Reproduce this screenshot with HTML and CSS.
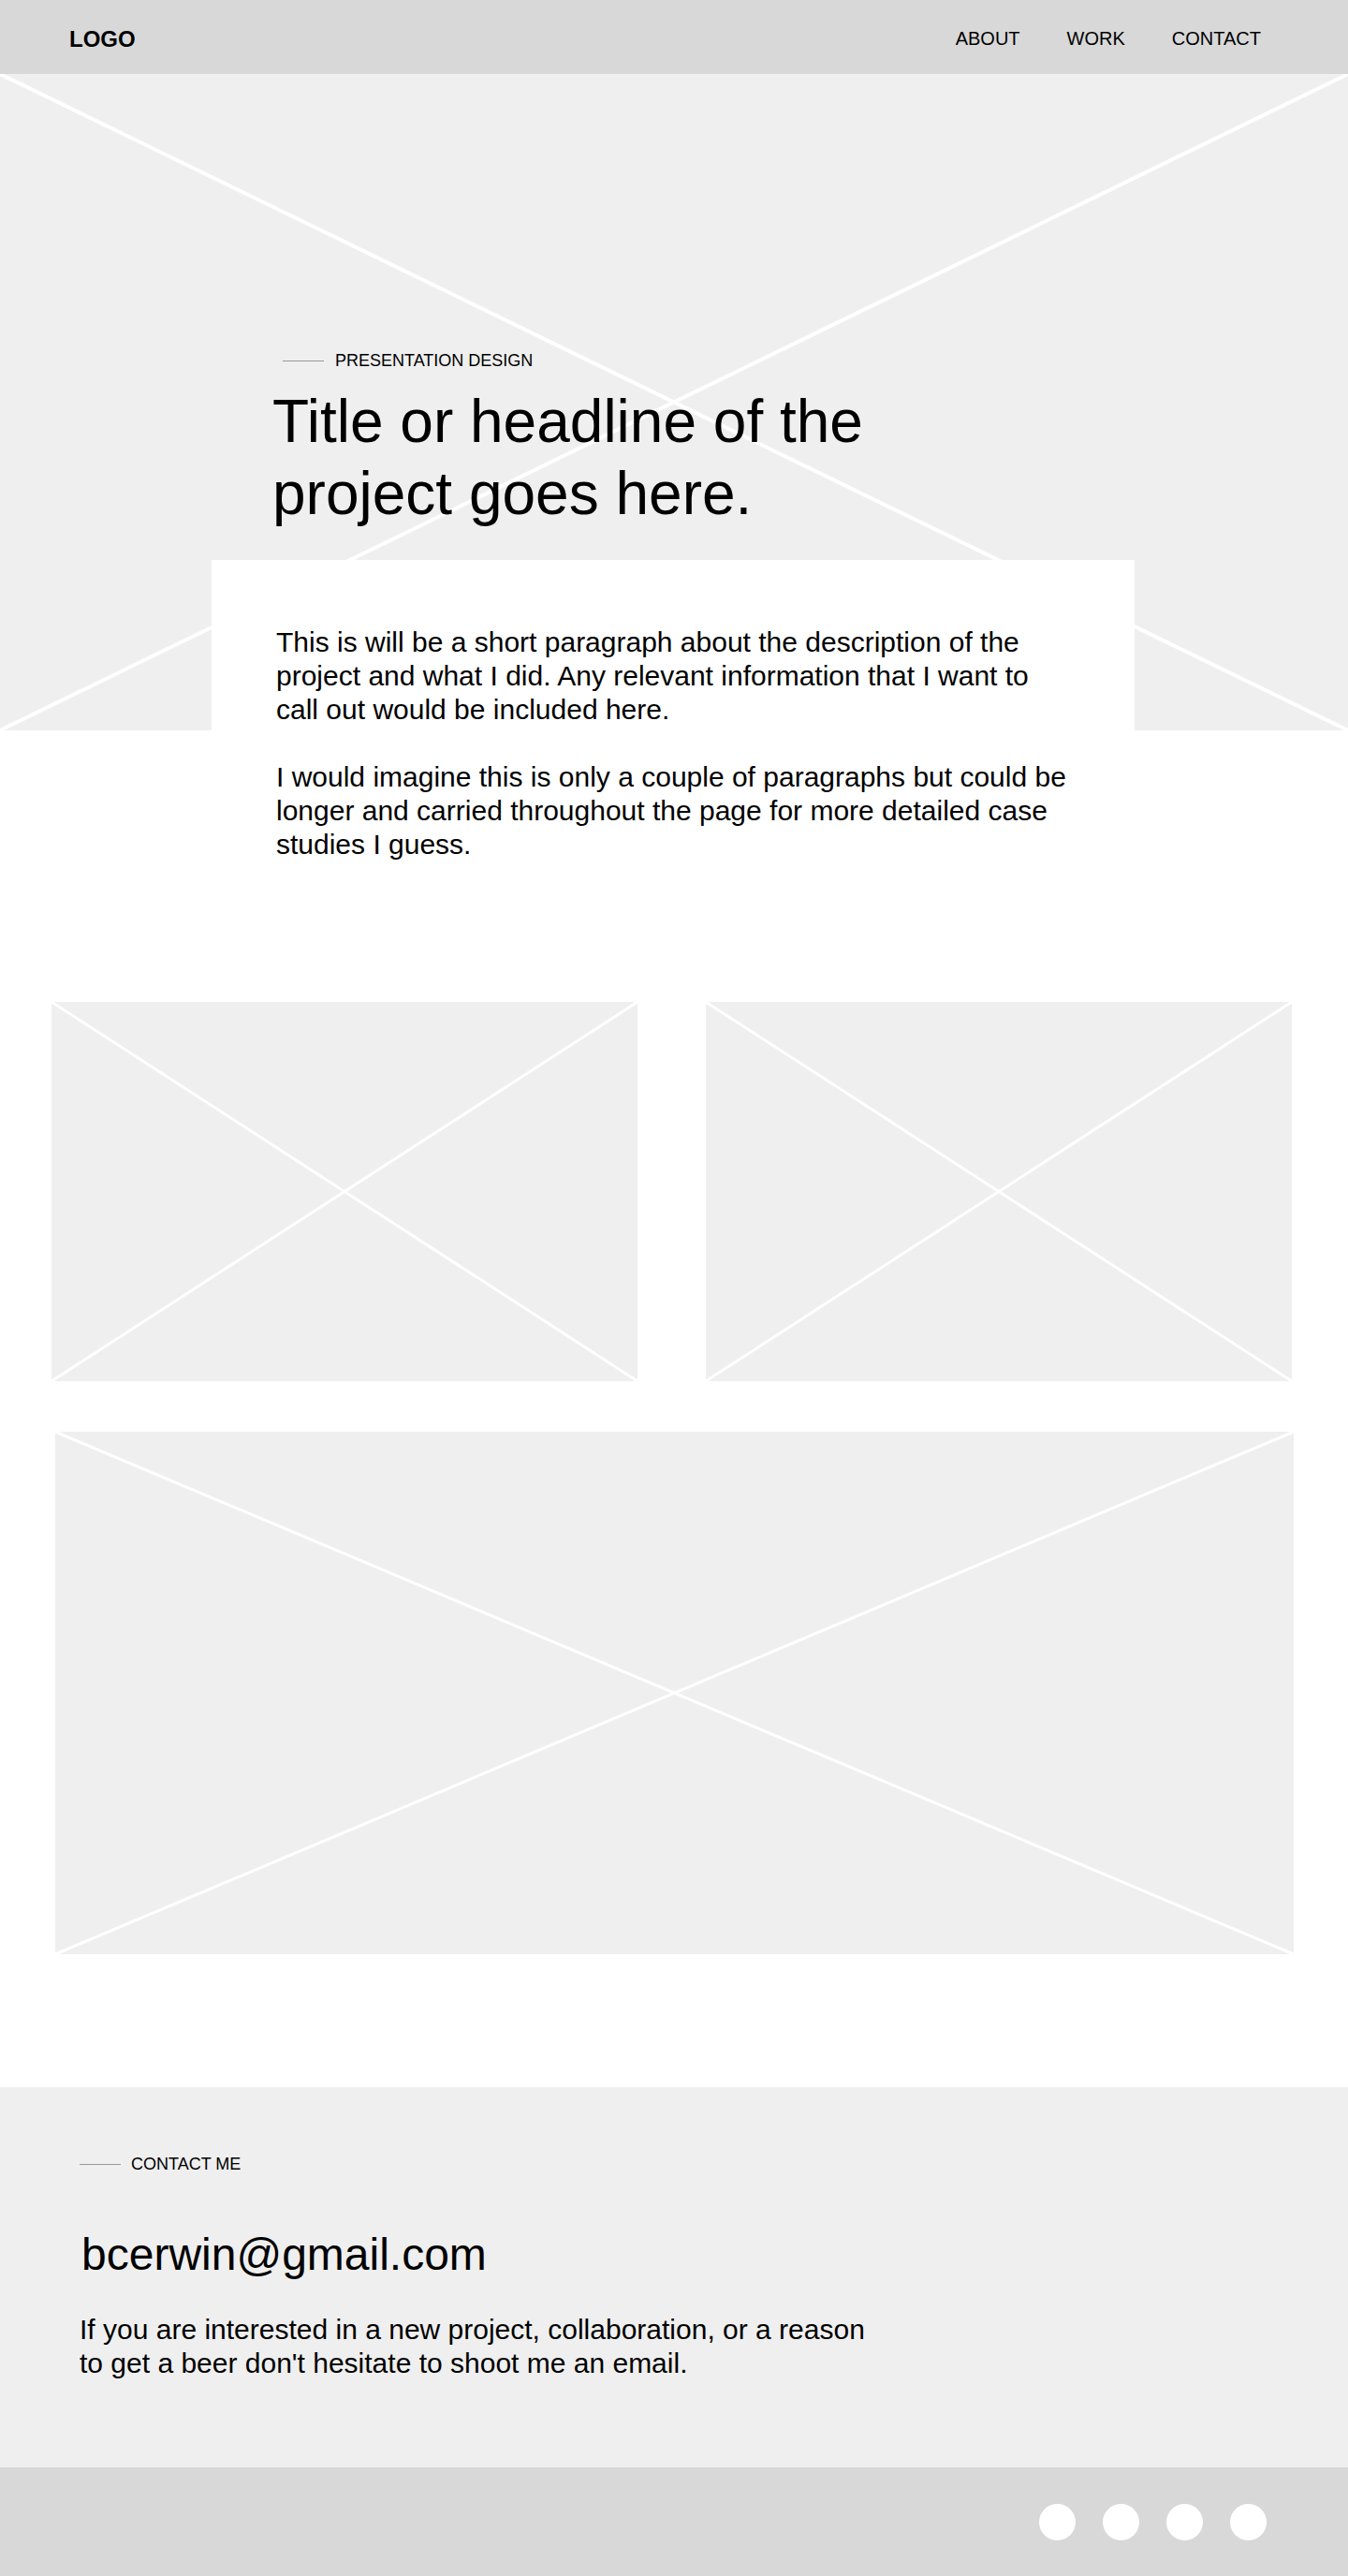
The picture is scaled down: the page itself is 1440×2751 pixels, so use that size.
FILE: index.html
```html
<!DOCTYPE html>
<html lang="en">
<head>
    <meta charset="UTF-8">
    <meta name="viewport" content="width=device-width, initial-scale=1.0">
    <title>Project Case Study</title>
    <link rel="stylesheet" href="styles.css">
</head>
<body>

    <!-- Header -->
    <header class="header">
        <div class="logo">LOGO</div>
        <nav class="nav">
            <a href="#">ABOUT</a>
            <a href="#">WORK</a>
            <a href="#">CONTACT</a>
        </nav>
    </header>

    <!-- Hero -->
    <section class="hero">
        <svg class="hero-x" viewBox="0 0 100 100" preserveAspectRatio="none">
            <line x1="0" y1="0" x2="100" y2="100" vector-effect="non-scaling-stroke"/>
            <line x1="100" y1="0" x2="0" y2="100" vector-effect="non-scaling-stroke"/>
        </svg>
        <div class="hero-content">
            <div class="eyebrow"><span class="rule"></span>PRESENTATION DESIGN</div>
            <h1 class="title">Title or headline of the project goes here.</h1>
        </div>
    </section>

    <!-- Intro card -->
    <section class="intro">
        <p>This is will be a short paragraph about the description of the project and what I did. Any relevant information that I want to<br>call out would be included here.</p>
        <p>I would imagine this is only a couple of paragraphs but could be longer and carried throughout the page for more detailed case studies I guess.</p>
    </section>

    <!-- Images -->
    <section class="gallery">
        <div class="img-row">
            <div class="placeholder">
                <svg viewBox="0 0 100 100" preserveAspectRatio="none">
                    <line x1="0" y1="0" x2="100" y2="100" vector-effect="non-scaling-stroke"/>
                    <line x1="100" y1="0" x2="0" y2="100" vector-effect="non-scaling-stroke"/>
                </svg>
            </div>
            <div class="placeholder">
                <svg viewBox="0 0 100 100" preserveAspectRatio="none">
                    <line x1="0" y1="0" x2="100" y2="100" vector-effect="non-scaling-stroke"/>
                    <line x1="100" y1="0" x2="0" y2="100" vector-effect="non-scaling-stroke"/>
                </svg>
            </div>
        </div>
        <div class="placeholder wide">
            <svg viewBox="0 0 100 100" preserveAspectRatio="none">
                <line x1="0" y1="0" x2="100" y2="100" vector-effect="non-scaling-stroke"/>
                <line x1="100" y1="0" x2="0" y2="100" vector-effect="non-scaling-stroke"/>
            </svg>
        </div>
    </section>

    <!-- Contact -->
    <section class="contact">
        <div class="eyebrow"><span class="rule"></span>CONTACT ME</div>
        <div class="email">bcerwin@gmail.com</div>
        <p class="contact-text">If you are interested in a new project, collaboration, or a reason to get a beer don't hesitate to shoot me an email.</p>
    </section>

    <!-- Footer -->
    <footer class="footer">
        <div class="socials">
            <span class="dot"></span>
            <span class="dot"></span>
            <span class="dot"></span>
            <span class="dot"></span>
        </div>
    </footer>

</body>
</html>
```

FILE: styles.css
```css
* {
    margin: 0;
    padding: 0;
    box-sizing: border-box;
}

body {
    font-family: "Liberation Sans", Arial, sans-serif;
    color: #000;
    background: #fff;
}

.header {
    height: 79px;
    background-color: #d8d8d8;
    display: flex;
    justify-content: space-between;
    align-items: center;
    padding: 4px 93px 0 74px;
}

.logo {
    font-size: 24px;
    font-weight: bold;
}

.nav {
    display: flex;
    gap: 50px;
}

.nav a {
    color: #000;
    text-decoration: none;
    font-size: 20px;
}

.hero {
    position: relative;
    height: 701px;
    background-color: #efefef;
    overflow: hidden;
}

.hero-x {
    position: absolute;
    top: 0;
    left: 0;
    width: 100%;
    height: 100%;
}

.hero-x line {
    stroke: #fff;
    stroke-width: 4;
}

.placeholder line {
    stroke: #fff;
    stroke-width: 3;
}

.hero-content {
    position: relative;
    padding: 296px 0 0 291px;
}

.eyebrow {
    display: flex;
    align-items: center;
    height: 20px;
    font-size: 18px;
    padding-left: 11px;
}

.rule {
    display: inline-block;
    width: 44px;
    height: 1px;
    background-color: #999;
    margin-right: 12px;
}

.title {
    margin-top: 17px;
    max-width: 720px;
    font-size: 64px;
    font-weight: normal;
    line-height: 77px;
}

.intro {
    position: relative;
    width: 986px;
    margin: -182px 0 0 226px;
    background-color: #fff;
    padding: 70px 47px 150px 69px;
}

.intro p {
    font-size: 30px;
    line-height: 36px;
}

.intro p + p {
    margin-top: 36px;
}

.gallery {
    padding-bottom: 142px;
}

.img-row {
    display: grid;
    grid-template-columns: 626px 626px;
    gap: 73px;
    margin-left: 55px;
}

.placeholder {
    height: 405px;
    background-color: #efefef;
}

.placeholder svg {
    display: block;
    width: 100%;
    height: 100%;
}

.placeholder.wide {
    width: 1323px;
    height: 558px;
    margin: 54px 0 0 59px;
}

.contact {
    background-color: #efefef;
    padding: 72px 0 93px 85px;
}

.contact .eyebrow {
    padding-left: 0;
}

.contact .rule {
    margin-right: 11px;
}

.email {
    margin-top: 58px;
    font-size: 48px;
    line-height: 57px;
    padding-left: 2px;
}

.contact-text {
    margin-top: 34px;
    max-width: 860px;
    font-size: 30px;
    line-height: 36px;
}

.footer {
    height: 116px;
    background-color: #d8d8d8;
    display: flex;
    justify-content: flex-end;
    align-items: center;
    padding-right: 87px;
}

.socials {
    display: flex;
    gap: 29px;
}

.dot {
    width: 39px;
    height: 39px;
    border-radius: 50%;
    background-color: #fff;
}
```
